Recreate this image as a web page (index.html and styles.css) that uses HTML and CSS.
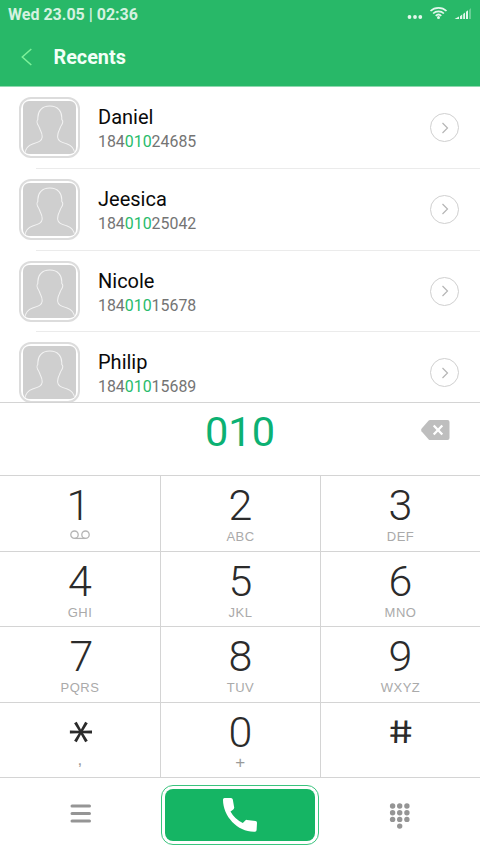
FILE: index.html
```html
<!DOCTYPE html>
<html lang="en">
<head>
<meta charset="utf-8">
<title>Recents</title>
<link rel="stylesheet" href="styles.css">
</head>
<body>
<svg width="0" height="0" class="defs">
  <defs>
    <symbol id="person" viewBox="0 0 52 52">
      <path d="M2 52C2 47 5 43.700 10 42C15 40.500 18.500 39.500 18.800 35.500C19 32.500 18.300 31 17 28.500C16.300 27 16 25.500 15.300 24.500C13.800 22.500 13.200 19.500 14.600 18C14 10 18.500 5 26.300 5C34 5 38.700 10 38 18C39.500 19.500 38.800 22.500 37.300 24.500C36.600 25.500 36.300 27 35.600 28.500C34.300 31 33.800 32.500 34 35.500C34.300 39.500 38 40.500 42.800 42C47.800 43.700 50.500 47 50.700 52"/>
    </symbol>
    <symbol id="chevron" viewBox="0 0 12 12"><path d="M3.500 1L8.500 6L3.500 11"/></symbol>
  </defs>
</svg>
<div class="phone">
  <header class="header">
    <div class="status">
      <span>Wed 23.05 | 02:36</span>
      <svg class="status-icons" viewBox="0 0 66 16" width="66" height="16">
        <g fill="#e3f7ec">
          <circle cx="3.500" cy="11" r="1.900"/><circle cx="9" cy="11" r="1.900"/><circle cx="14.300" cy="11" r="1.900"/>
          <circle cx="32.500" cy="11.600" r="1.500"/>
          <path d="M48.500 13L53 10.600V13ZM54 10.200L56.200 8.600V13H54ZM57.200 8L59 6.400V13H57.200ZM60 5.700L62 4.200V13H60Z"/>
          <path d="M63 4L65 2V13H63Z" opacity=".35"/>
        </g>
        <g fill="none" stroke="#e3f7ec" stroke-width="1.700">
          <path d="M24.500 5C29 .7 36 .7 40.500 5M27.100 7.500C30.100 4.700 34.900 4.700 37.900 7.500M29.700 9.800C31.300 8.300 33.700 8.300 35.300 9.800"/>
        </g>
      </svg>
    </div>
    <div class="titlebar">
      <svg class="back" viewBox="0 0 12 18" width="12" height="18"><path d="M10.300 1L1.300 9L10.300 17"/></svg>
      <h1>Recents</h1>
    </div>
  </header>

  <main class="list">
    <div class="contact">
      <div class="avatar"><svg viewBox="0 0 52 52"><use href="#person"/></svg></div>
      <div class="info"><div class="name">Daniel</div><div class="number">184<b>010</b>24685</div></div>
      <div class="more"><svg><use href="#chevron"/></svg></div>
    </div>
    <div class="contact">
      <div class="avatar"><svg viewBox="0 0 52 52"><use href="#person"/></svg></div>
      <div class="info"><div class="name">Jeesica</div><div class="number">184<b>010</b>25042</div></div>
      <div class="more"><svg><use href="#chevron"/></svg></div>
    </div>
    <div class="contact">
      <div class="avatar"><svg viewBox="0 0 52 52"><use href="#person"/></svg></div>
      <div class="info"><div class="name">Nicole</div><div class="number">184<b>010</b>15678</div></div>
      <div class="more"><svg><use href="#chevron"/></svg></div>
    </div>
    <div class="contact">
      <div class="avatar"><svg viewBox="0 0 52 52"><use href="#person"/></svg></div>
      <div class="info"><div class="name">Philip</div><div class="number">184<b>010</b>15689</div></div>
      <div class="more"><svg><use href="#chevron"/></svg></div>
    </div>
  </main>

  <section class="entry">
    <div class="typed">010</div>
    <svg class="delete" viewBox="0 0 29 20" width="29" height="20">
      <path d="M9 0H26.500Q28.500 0 28.500 2V18Q28.500 20 26.500 20H9Q8.300 20 7.700 19.400L.5 11.200Q-.2 10 .5 8.800L7.700 .6Q8.300 0 9 0Z" fill="#bebebe"/>
      <path d="M12.700 5.500L21.300 14.500M21.300 5.500L12.700 14.500" stroke="#fff" stroke-width="2.300"/>
    </svg>
  </section>

  <section class="keypad">
    <div class="key"><span class="digit one">1</span>
      <svg class="voicemail" viewBox="0 0 20 10" width="20" height="10"><circle cx="4.500" cy="4.700" r="3.700"/><circle cx="15.500" cy="4.700" r="3.700"/><path d="M4.500 8.400H15.500"/></svg></div>
    <div class="key"><span class="digit">2</span><span class="letters">ABC</span></div>
    <div class="key"><span class="digit">3</span><span class="letters">DEF</span></div>
    <div class="key"><span class="digit">4</span><span class="letters">GHI</span></div>
    <div class="key"><span class="digit">5</span><span class="letters">JKL</span></div>
    <div class="key"><span class="digit">6</span><span class="letters">MNO</span></div>
    <div class="key"><span class="digit seven">7</span><span class="letters">PQRS</span></div>
    <div class="key"><span class="digit">8</span><span class="letters">TUV</span></div>
    <div class="key"><span class="digit">9</span><span class="letters">WXYZ</span></div>
    <div class="key"><span class="digit star">*</span><span class="letters comma">,</span></div>
    <div class="key"><span class="digit">0</span><span class="letters plus">+</span></div>
    <div class="key"><span class="digit hash">#</span></div>
  </section>

  <footer class="actions">
    <div class="action"><svg viewBox="0 0 22 20" width="22" height="20"><path d="M2 3H19.500M2 10.500H19.500M2 18H19.500" stroke="#959595" stroke-width="3" stroke-linecap="round"/></svg></div>
    <div class="call"><div class="call-fill">
      <svg viewBox="0 0 36 36" width="36" height="36"><path d="M2.500 1H9Q10.500 1 10.800 2.500L12.200 10.500Q12.400 11.700 11.300 12.400L8.500 14.500Q12.500 22 20.800 26L23.300 23.500Q24 22.700 25 22.900L33.500 24Q35 24.300 35 25.800L34.600 33Q34.500 34.700 33 34.800C16 35.500 .8 19.500 1 2.500Q1 1 2.500 1Z" fill="#fff"/></svg>
    </div></div>
    <div class="action"><svg viewBox="0 0 22 28" width="22" height="28"><g fill="#959595">
      <circle cx="3.600" cy="3" r="2.700"/><circle cx="10.700" cy="3" r="2.700"/><circle cx="17.900" cy="3" r="2.700"/>
      <circle cx="3.600" cy="9.700" r="2.700"/><circle cx="10.700" cy="9.700" r="2.700"/><circle cx="17.900" cy="9.700" r="2.700"/>
      <circle cx="3.600" cy="16.400" r="2.700"/><circle cx="10.700" cy="16.400" r="2.700"/><circle cx="17.900" cy="16.400" r="2.700"/>
      <circle cx="10.700" cy="23.100" r="2.700"/></g></svg></div>
  </footer>
</div>
</body>
</html>
```
FILE: styles.css
```css
* { box-sizing: border-box; }
body { margin: 0; font-family: Roboto, "Liberation Sans", sans-serif; background: #fff; }
svg { display: block; flex: none; }
.defs { position: absolute; }
.phone { width: 480px; height: 853px; display: flex; flex-direction: column; overflow: hidden; }

.header { height: 87px; flex: none; background: #28b868; border-bottom: 1px solid #8fd9b0; color: #f2fff7; }
.status { height: 28px; display: flex; justify-content: space-between; padding: 0 8px; font-size: 16px; font-weight: 700; line-height: 29px; color: #d5f2e0; }
.status-icons { margin-top: 6px; }
.titlebar { height: 58px; display: flex; align-items: center; padding-left: 21px; }
.back { fill: none; stroke: #7df29a; stroke-width: 1.5; }
.titlebar h1 { margin: 2px 0 0 20.5px; font-size: 19.8px; line-height: 24px; font-weight: 700; }

.list { height: 315px; flex: none; overflow: hidden; }
.contact { height: 81.8px; display: flex; padding: 10px 21px 0 19px; background: linear-gradient(#ebebeb, #ebebeb) 36px 100% / 444px 1px no-repeat; }
.avatar { width: 61px; height: 61px; border: 2px solid #dcdcdc; border-radius: 12px; padding: 2px; }
.avatar svg { width: 100%; height: 100%; background: #cfcfcf; border-radius: 6px; fill: none; stroke: #f3f3f3; stroke-width: 1; }
.info { flex: 1; padding: 8px 0 0 18px; }
.name { font-size: 20px; line-height: 24px; color: #0a0a0a; }
.number { margin-top: 1px; font-size: 15.9px; line-height: 24px; color: #747474; }
.number b { font-weight: 400; color: #28bb6b; }
.more { width: 29px; height: 29px; margin-top: 16px; border: 1px solid #d0d0d0; border-radius: 50%; display: flex; align-items: center; justify-content: center; }
.more svg { width: 12px; height: 12px; margin-left: 1px; fill: none; stroke: #b5b5b5; stroke-width: 1.2; }

.entry { height: 74px; flex: none; display: grid; grid-template-columns: 1fr auto 1fr; border-top: 1px solid #d4d4d4; border-bottom: 1px solid #d4d4d4; }
.typed { grid-column: 2; font-size: 41.5px; line-height: 58px; color: #0cb173; }
.delete { justify-self: end; margin: 17px 30px 0 0; }

.keypad { flex: none; display: grid; grid-template-columns: 161px 160px 159px; grid-template-rows: 76px 75px 76px 75px; }
.key { border-bottom: 1px solid #d4d4d4; border-right: 1px solid #d4d4d4; display: flex; flex-direction: column; align-items: center; padding-top: 7px; }
.key:nth-child(3n) { border-right: 0; }
.digit { font-size: 43px; font-weight: 300; line-height: 44px; color: #2b2b2b; }
.one { margin-right: 3px; }
.seven { margin-left: 3px; }
.letters { margin-top: 2px; font: 13px/16px "Liberation Sans", Arial, sans-serif; letter-spacing: .5px; color: #aaa; }
.comma, .plus { font-size: 17px; color: #999; }
.comma { margin-top: -2px; }
.plus { margin-top: 1px; }
.voicemail { margin-top: 3px; fill: none; stroke: #b5b5b5; stroke-width: 1.3; }
.star { font-family: Inter, sans-serif; font-size: 54px; transform: translateX(-8px) rotate(90deg); }
.hash { font-family: Inter, sans-serif; font-size: 31px; font-weight: 400; transform: scaleX(1.22) skewX(8deg); }

.actions { flex: 1; display: grid; grid-template-columns: 161px 158px 161px; }
.action { display: flex; justify-content: center; padding-top: 25px; }
.call { height: 60px; margin-top: 7px; border: 1.5px solid #3bc47e; border-radius: 12px; padding: 3px; }
.call-fill { height: 100%; background: #15b564; border-radius: 8px; display: flex; align-items: center; justify-content: center; }
```
